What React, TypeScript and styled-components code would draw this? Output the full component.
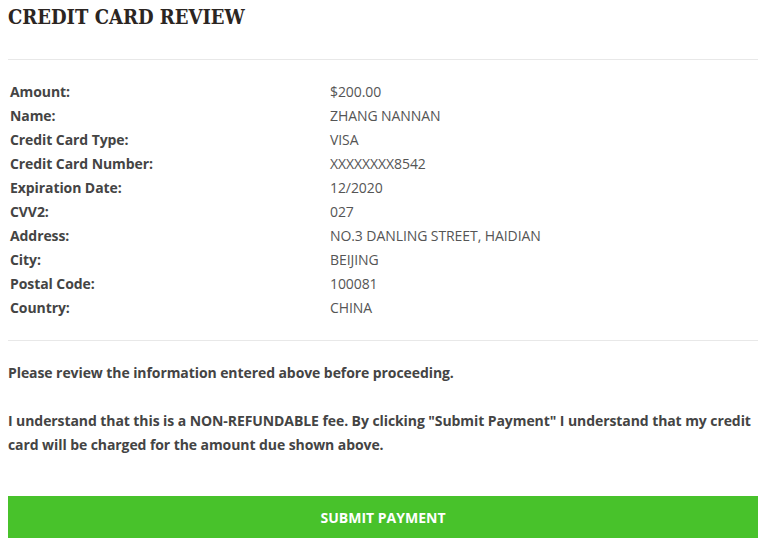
import styled, { createGlobalStyle } from "styled-components";

const GlobalStyle = createGlobalStyle`
  body {
    margin: 0;
    background: #ffffff;
    font-family: "Open Sans", "Liberation Sans", sans-serif;
    color: #444444;
  }
`;

const Page = styled.div`
  padding: 0 17px 0 8px;
`;

const Title = styled.h2`
  font-family: "DejaVu Serif Condensed", "DejaVu Serif", "Liberation Serif", serif;
  font-stretch: condensed;
  font-size: 20px;
  font-weight: bold;
  color: #2b2522;
  margin: 0;
  padding-top: 4px;
  line-height: 26px;
`;

const Divider = styled.hr`
  border: none;
  border-top: 1px solid #e8e8e8;
  margin: ${(p: { $top: number; $bottom: number }) => `${p.$top}px 0 ${p.$bottom}px`};
`;

const Table = styled.table`
  width: 100%;
  border-collapse: collapse;
  font-size: 14px;
  letter-spacing: -0.08px;
`;

const Label = styled.td`
  width: 316px;
  padding: 0 2px;
  height: 24px;
  font-weight: 700;
  color: #444444;
`;

const Value = styled.td`
  padding: 0 2px;
  height: 24px;
  color: #555555;
`;

const Note = styled.p`
  font-size: 14px;
  font-weight: 700;
  line-height: 24px;
  letter-spacing: -0.08px;
  color: #444444;
  margin: 0 0 24px;
`;

const SubmitButton = styled.button`
  display: block;
  width: 100%;
  height: 42px;
  margin-top: 39px;
  border: none;
  background: #48c22b;
  color: #ffffff;
  font-family: "Open Sans", "Liberation Sans", sans-serif;
  font-size: 14px;
  font-weight: 700;
  text-transform: uppercase;
  cursor: pointer;
`;

const rows: [string, string][] = [
  ["Amount:", "$200.00"],
  ["Name:", "ZHANG NANNAN"],
  ["Credit Card Type:", "VISA"],
  ["Credit Card Number:", "XXXXXXXX8542"],
  ["Expiration Date:", "12/2020"],
  ["CVV2:", "027"],
  ["Address:", "NO.3 DANLING STREET, HAIDIAN"],
  ["City:", "BEIJING"],
  ["Postal Code:", "100081"],
  ["Country:", "CHINA"],
];

export default function App() {
  return (
    <>
      <GlobalStyle />
      <Page>
        <Title>CREDIT CARD REVIEW</Title>
        <Divider $top={29} $bottom={19} />
        <Table>
          <tbody>
            {rows.map(([label, value]) => (
              <tr key={label}>
                <Label>{label}</Label>
                <Value>{value}</Value>
              </tr>
            ))}
          </tbody>
        </Table>
        <Divider $top={21} $bottom={20} />
        <Note>Please review the information entered above before proceeding.</Note>
        <Note>
          I understand that this is a NON-REFUNDABLE fee. By clicking "Submit Payment" I understand that my
          credit card will be charged for the amount due shown above.
        </Note>
        <SubmitButton>Submit Payment</SubmitButton>
      </Page>
    </>
  );
}
